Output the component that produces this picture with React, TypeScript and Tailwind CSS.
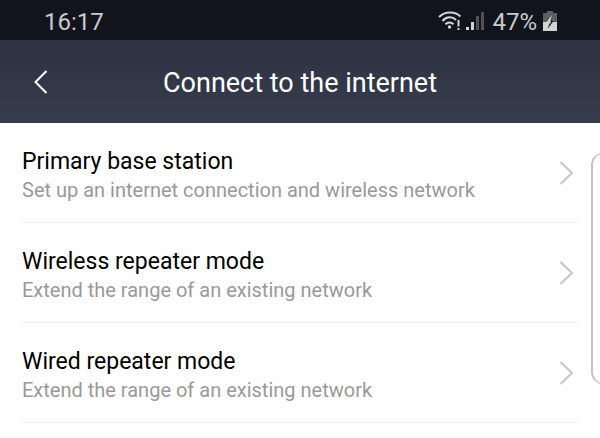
const modes = [
  { title: 'Primary base station', detail: 'Set up an internet connection and wireless network' },
  { title: 'Wireless repeater mode', detail: 'Extend the range of an existing network' },
  { title: 'Wired repeater mode', detail: 'Extend the range of an existing network' },
]

function WifiIcon() {
  return (
    <svg className="w-6 h-5" viewBox="0 0 24 20" fill="none" stroke="#d2d3d5" strokeWidth="2">
      <path d="M1 6C7 0 17 0 22.500 5.500" />
      <path d="M4.500 10C8.500 5.300 14.500 5.300 18 9" />
      <path d="M7.500 13.300C9.500 10.800 13.500 10.800 15.500 13.300" />
      <circle cx="11.500" cy="16" r="1.700" fill="#d2d3d5" stroke="none" />
      <path d="M20.500 9V15.500M20.500 17V19" />
    </svg>
  )
}

function SignalIcon() {
  return (
    <svg className="w-[18px] h-5" viewBox="0 0 18 20">
      <path fill="#d2d3d5" d="M0 16h3v3H0zM5 11h3v8H5z" />
      <path fill="#505257" d="M10 5h3v14h-3zM15 1h3v18h-3z" />
    </svg>
  )
}

function BatteryIcon() {
  return (
    <svg className="w-[14px] h-5" viewBox="0 0 14 20">
      <path fill="#5c5e63" d="M4 0h6v2h4v9H0V2h4z" />
      <path fill="#d2d3d5" d="M0 11h14v9H0z" />
      <path fill="#d2d3d5" d="M9 4L3 12H7z" />
      <path fill="#11141c" d="M9.500 4.500L7.500 10H10.500L4.500 18L6.500 12.500H7.500z" />
    </svg>
  )
}

export default function App() {
  return (
    <div className="relative min-h-screen overflow-hidden bg-white font-[Roboto,sans-serif]">
      <div className="flex h-10 items-center justify-between bg-[#11141c] pl-11 pr-[43px] pt-1 text-2xl text-[#c9cacc]">
        <span>16:17</span>
        <div className="flex items-center">
          <span className="flex items-center gap-1 pb-0.5">
            <WifiIcon />
            <SignalIcon />
          </span>
          <span className="ml-2">47%</span>
          <span className="ml-1.5 flex pb-0.5"><BatteryIcon /></span>
        </div>
      </div>

      <header className="grid h-[83px] grid-cols-[80px_1fr_80px] items-center bg-gradient-to-b from-[#2d3243] to-[#383d4e] text-white">
        <button type="button" aria-label="Back" className="flex h-full items-center pl-[34px]">
          <svg className="w-[14px] h-6" viewBox="0 0 14 24" fill="none" stroke="currentColor" strokeWidth="2">
            <path d="M12.500 1L1.500 12L12.500 23" />
          </svg>
        </button>
        <h1 className="pt-0.5 text-center text-[27px] leading-8">Connect to the internet</h1>
      </header>

      <ul className="px-[22px]">
        {modes.map((mode) => (
          <li key={mode.title} className="border-b border-[#ececec]">
            <button type="button" className="flex h-[99px] w-full items-center justify-between pr-1 text-left">
              <span className="block pt-0.5">
                <span className="block text-[23px] leading-8 text-black">{mode.title}</span>
                <span className="block text-xl leading-6 text-[#999]">{mode.detail}</span>
              </span>
              <svg className="w-[14px] h-6 shrink-0" viewBox="0 0 14 24" fill="none" stroke="#c6c6c6" strokeWidth="2">
                <path d="M.5 1L12 12L.5 23" />
              </svg>
            </button>
          </li>
        ))}
      </ul>

      <div className="absolute -right-2 top-[153px] h-[231px] w-[17px] rounded-l-xl border border-l-2 border-[#c4c4c4] bg-white" />
    </div>
  )
}
